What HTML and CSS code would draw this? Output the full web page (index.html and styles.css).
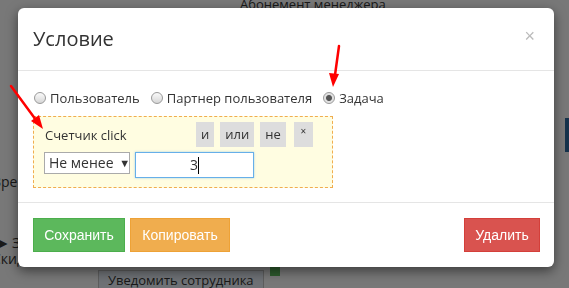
FILE: index.html
```html
<!DOCTYPE html>
<html lang="ru">
<head>
    <meta charset="utf-8">
    <title>Условие</title>
    <link rel="stylesheet" href="styles.css">
</head>
<body>
    <div class="page">
        <div class="page-top">Абонемент менеджера</div>
        <div class="page-mid">Врем</div>
        <div class="page-row">
            <span class="page-step">&#9654; З</span>
            <span class="page-sub">Скид</span>
        </div>
        <div class="page-bottom">
            <span class="page-tag">Уведомить сотрудника</span>
            <span class="page-mark"></span>
        </div>
        <div class="page-side"></div>
    </div>

    <div class="backdrop"></div>

    <div class="modal">
        <div class="modal-header">
            <h4 class="modal-title">Условие</h4>
            <span class="close">&times;</span>
        </div>
        <div class="modal-body">
            <div class="radios">
                <label class="radio"><input type="radio" name="type"> Пользователь</label>
                <label class="radio"><input type="radio" name="type"> Партнер пользователя</label>
                <label class="radio"><input type="radio" name="type" checked> Задача</label>
            </div>
            <div class="cond">
                <div class="cond-top">
                    <span class="cond-name">Счетчик click</span>
                    <div class="ops">
                        <span class="op">и</span>
                        <span class="op">или</span>
                        <span class="op">не</span>
                        <span class="op op-x">&times;</span>
                    </div>
                </div>
                <div class="cond-row">
                    <span class="select">Не менее <span class="caret">&#9660;</span></span>
                    <span class="num">3<span class="cursor"></span></span>
                </div>
            </div>
        </div>
        <div class="modal-footer">
            <button class="btn btn-green">Сохранить</button>
            <button class="btn btn-orange">Копировать</button>
            <span class="spacer"></span>
            <button class="btn btn-red">Удалить</button>
        </div>
    </div>

    <svg class="arrows" width="569" height="288" viewBox="0 0 569 288">
        <g stroke="#f00" stroke-width="2.5" fill="#f00" stroke-linecap="round">
            <line x1="11" y1="86" x2="36" y2="120"/>
            <polygon points="43,129 31,121 39,115" stroke="none"/>
            <line x1="339" y1="46" x2="335" y2="75"/>
            <polygon points="333,87 329,73 339,74" stroke="none"/>
        </g>
    </svg>
</body>
</html>
```

FILE: styles.css
```css
body{
    margin: 0;
    font-family: "Open Sans", sans-serif;
    color: #333;
    background-color: #f0f0f0;
}

.page{
    width: 569px;
    height: 288px;
    overflow: hidden;
    position: relative;
}
.page-top{
    padding: 0 0 0 240px;
    font-size: 13px;
    line-height: 14px;
    margin-top: -3px;
}
.page-mid{
    margin-top: 161px;
    margin-left: -8px;
    font-size: 14px;
}
.page-row{
    margin-top: 42px;
    display: flex;
    flex-direction: column;
    font-size: 14px;
    line-height: 15px;
}
.page-step{
    margin-left: -4px;
    font-size: 15px;
    line-height: 18px;
}
.page-sub{
    margin-left: -8px;
}
.page-bottom{
    display: flex;
    margin-top: 4px;
    margin-left: 98px;
}
.page-tag{
    background-color: #dde3ea;
    border: 1px solid #bbb;
    padding: 0 9px;
    font-size: 13px;
    line-height: 18px;
}
.page-mark{
    width: 10px;
    height: 14px;
    background-color: #5cb85c;
    margin-left: 6px;
    margin-top: -8px;
}
.page-side{
    position: absolute;
    right: 0;
    top: 118px;
    width: 4px;
    height: 34px;
    background-color: #2a6496;
}

.backdrop{
    position: fixed;
    inset: 0;
    background-color: rgba(0, 0, 0, 0.5);
}

.modal{
    position: absolute;
    left: 18px;
    top: 8px;
    width: 536px;
    height: 259px;
    background-color: #fff;
    border-radius: 6px;
    box-shadow: 0 4px 12px rgba(0, 0, 0, 0.5);
    display: flex;
    flex-direction: column;
}
.modal-header{
    height: 62px;
    border-bottom: 1px solid #e5e5e5;
    display: flex;
    align-items: center;
    padding: 0 15px;
}
.modal-title{
    margin: 0;
    font-weight: normal;
    font-size: 20px;
    flex: 1;
    margin-top: -2px;
}
.close{
    color: #bbb;
    font-family: "Liberation Sans", sans-serif;
    font-size: 18px;
    margin-right: 4px;
    margin-top: -6px;
}

.modal-body{
    padding: 19px 15px 0;
    height: 112px;
}
.radios{
    display: flex;
    gap: 10px;
    font-size: 13px;
    line-height: 16px;
}
.radio{
    display: flex;
    align-items: center;
    gap: 4px;
}
.radio input{
    appearance: none;
    width: 12px;
    height: 12px;
    margin: 0 0 0 1px;
    border: 1px solid #999;
    border-radius: 50%;
    background: linear-gradient(#fafafa, #d6d6d6);
}
.radio input:checked{
    background: radial-gradient(circle, #555 0, #555 2.5px, #ddd 3.5px, #f2f2f2 100%);
}

.cond{
    margin-top: 10px;
    width: 300px;
    height: 72px;
    border: 1px dashed #f0ad4e;
    background-color: #fffde1;
    padding: 5px 0 0 11px;
    box-sizing: border-box;
}
.cond-top{
    display: flex;
    align-items: center;
}
.cond-name{
    font-size: 13px;
    flex: 0 0 151px;
}
.ops{
    display: flex;
    gap: 6px;
}
.op{
    background-color: #ddd;
    font-size: 13px;
    height: 25px;
    line-height: 25px;
    padding: 0 5px;
}
.op-x{
    font-size: 10px;
    line-height: 18px;
    width: 19px;
    padding: 0;
    text-align: center;
    margin-left: 2px;
}
.cond-row{
    display: flex;
    gap: 5px;
    margin-top: 5px;
    align-items: flex-start;
}
.select{
    width: 86px;
    height: 22px;
    box-sizing: border-box;
    border: 1px solid #aaa;
    background-color: #fff;
    font-size: 14px;
    line-height: 20px;
    padding-left: 4px;
    margin-left: -1px;
    white-space: nowrap;
}
.caret{
    font-size: 11px;
    margin-left: 2px;
    vertical-align: 1px;
}
.num{
    width: 119px;
    height: 26px;
    box-sizing: border-box;
    border: 1px solid #66afe9;
    box-shadow: 0 0 2px rgba(102, 175, 233, 0.6);
    background-color: #fff;
    text-align: center;
    font-size: 14px;
    line-height: 24px;
}
.cursor{
    display: inline-block;
    width: 1px;
    height: 17px;
    background-color: #000;
    vertical-align: -4px;
}

.modal-footer{
    border-top: 1px solid #e5e5e5;
    padding: 15px 14px 0 15px;
    display: flex;
    gap: 5px;
}
.spacer{
    flex: 1;
}
.btn{
    font-family: "Liberation Sans", sans-serif;
    font-size: 14px;
    height: 34px;
    padding: 0;
    color: #fff;
    border: 1px solid;
    border-radius: 0;
}
.btn-green{
    background-color: #5cb85c;
    border-color: #4cae4c;
    width: 92px;
}
.btn-orange{
    background-color: #f0ad4e;
    border-color: #eea236;
    width: 100px;
}
.btn-red{
    background-color: #d9534f;
    border-color: #d43f3a;
    width: 76px;
}

.arrows{
    position: absolute;
    left: 0;
    top: 0;
}
```
